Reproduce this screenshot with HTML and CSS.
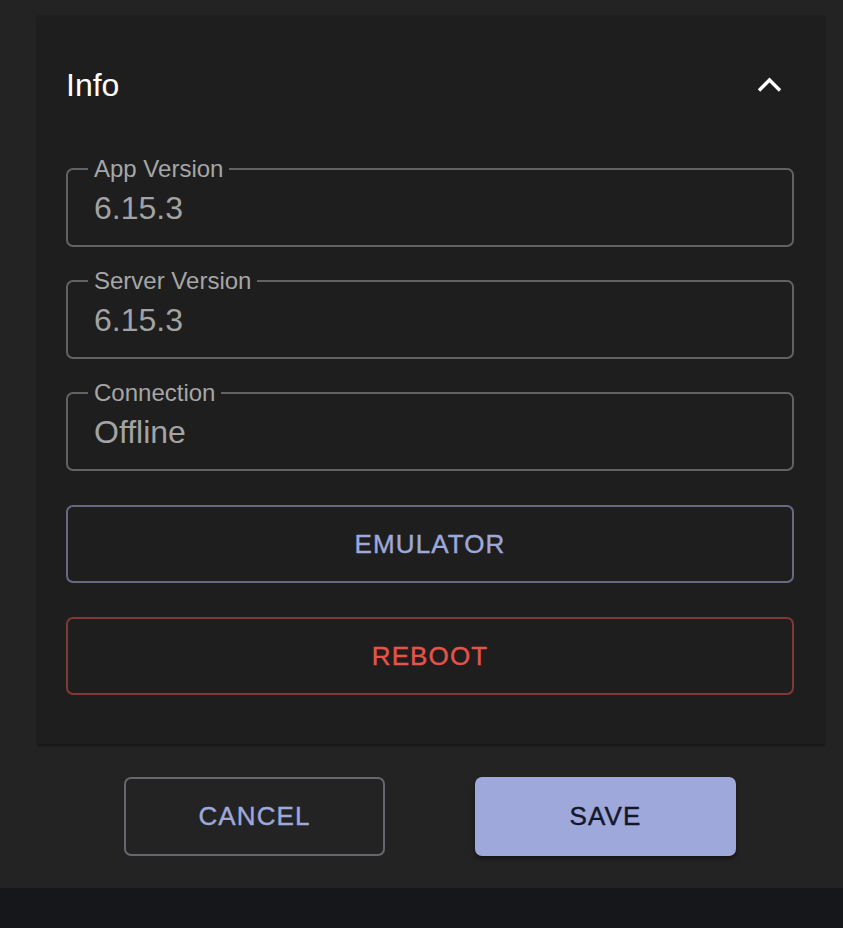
FILE: index.html
```html
<!DOCTYPE html>
<html lang="en">
<head>
    <meta charset="UTF-8">
    <meta name="viewport" content="width=device-width, initial-scale=1.0">
    <title>Settings</title>
    <link rel="stylesheet" href="styles.css">
</head>
<body>
    <div class="dialog">
        <section class="card">
            <header class="card_head">
                <span class="card_title">Info</span>
                <svg class="chevron" width="29" height="20" viewBox="0 0 29 20">
                    <polyline points="4,15.5 14.5,5 25,15.5" fill="none" stroke="#fff" stroke-width="3.4"/>
                </svg>
            </header>
            <div class="card_body">
                <fieldset class="field">
                    <legend>App Version</legend>
                    <div class="field_value">6.15.3</div>
                </fieldset>
                <fieldset class="field">
                    <legend>Server Version</legend>
                    <div class="field_value">6.15.3</div>
                </fieldset>
                <fieldset class="field">
                    <legend>Connection</legend>
                    <div class="field_value">Offline</div>
                </fieldset>
                <button class="btn btn_outline">EMULATOR</button>
                <button class="btn btn_danger">REBOOT</button>
            </div>
        </section>
        <nav class="actions">
            <button class="btn btn_cancel">CANCEL</button>
            <button class="btn btn_save">SAVE</button>
        </nav>
    </div>
    <div class="bottom_bar"></div>
</body>
</html>
```

FILE: styles.css
```css
html, body {
    margin: 0;
    padding: 0;
    background-color: #16171a;
    font-family: "Liberation Sans", Arial, sans-serif;
}

.dialog {
    height: 888px;
    box-sizing: border-box;
    background-color: #232323;
    padding: 15px 18px 0 37px;
}

.card {
    background-color: #1e1e1e;
    box-shadow: 0 2px 2px rgba(0, 0, 0, 0.35);
    padding: 0 31px 49px 29px;
}

.card_head {
    height: 140px;
    display: flex;
    align-items: center;
    justify-content: space-between;
    padding-right: 10px;
}

.card_title {
    color: #ffffff;
    font-size: 32px;
}

.chevron {
    display: block;
}

.card_body {
    display: flex;
    flex-direction: column;
}

.field {
    margin: 0 0 20px 0;
    padding: 0 20px 18px 20px;
    border: 2px solid #626262;
    border-radius: 7px;
    min-width: 0;
}

.field legend {
    padding: 0 6px;
    font-size: 24px;
    line-height: 28px;
    color: #a6a6a6;
}

.field_value {
    padding: 6px 6px 0 6px;
    font-size: 32px;
    line-height: 38px;
    color: #a3a3a3;
}

.btn {
    box-sizing: border-box;
    height: 78px;
    border-radius: 7px;
    background: transparent;
    font-family: "Liberation Sans", Arial, sans-serif;
    font-size: 26px;
    letter-spacing: 1.1px;
    -webkit-text-stroke: 0.4px currentColor;
    cursor: pointer;
}

.btn_outline {
    margin-top: 14px;
    border: 2px solid #666980;
    color: #9fa8da;
}

.btn_danger {
    margin-top: 34px;
    border: 2px solid #823835;
    color: #e5534b;
}

.actions {
    display: flex;
    justify-content: center;
    gap: 90px;
    padding: 33px 2px 0 0;
}

.btn_cancel {
    width: 261px;
    height: 79px;
    border: 2px solid #66666f;
    color: #9fa8da;
}

.btn_save {
    width: 261px;
    height: 79px;
    border: none;
    background-color: #9fa8da;
    color: #14162a;
    box-shadow: 0 3px 4px rgba(0, 0, 0, 0.4);
}

.bottom_bar {
    height: 40px;
    background-color: #16171a;
}
```
